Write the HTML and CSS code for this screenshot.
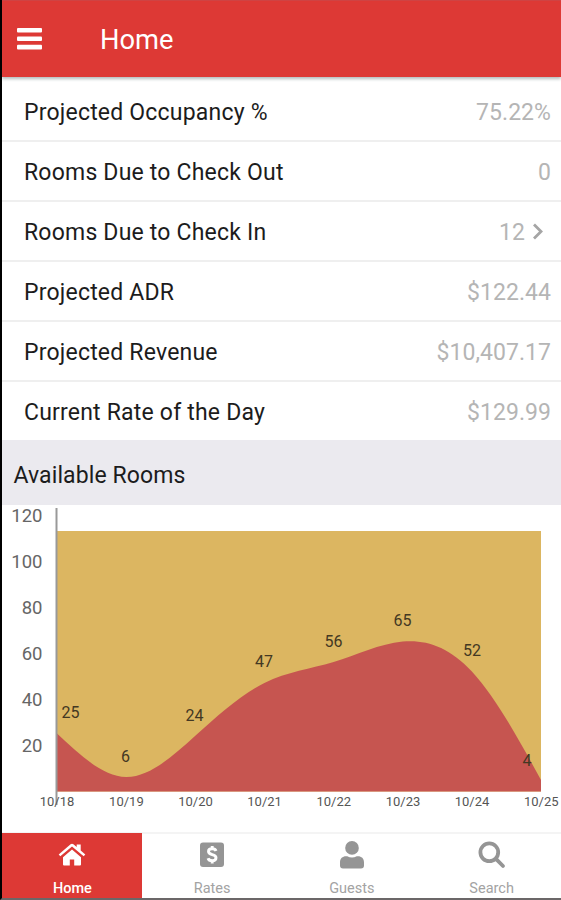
FILE: index.html
```html
<!DOCTYPE html>
<html lang="en">
<head>
    <meta charset="UTF-8">
    <meta name="viewport" content="width=device-width, initial-scale=1.0">
    <title>Home</title>
    <link rel="stylesheet" href="styles.css">
</head>
<body>
    <div class="app">
        <header class="navbar">
            <svg class="menu-icon" width="26" height="24" viewBox="0 0 26 24">
                <rect x="0" y="1" width="25" height="4.6" rx="1"/>
                <rect x="0" y="9.4" width="25" height="4.6" rx="1"/>
                <rect x="0" y="17.8" width="25" height="4.6" rx="1"/>
            </svg>
            <h1 class="title">Home</h1>
        </header>

        <ul class="stats">
            <li class="stat"><span>Projected Occupancy %</span><span class="value">75.22%</span></li>
            <li class="stat"><span>Rooms Due to Check Out</span><span class="value">0</span></li>
            <li class="stat">
                <span>Rooms Due to Check In</span>
                <span class="value link">12
                    <svg class="chevron" width="12" height="18" viewBox="0 0 12 18"><path d="M2 1.5L9 8.5L2 15.5"/></svg>
                </span>
            </li>
            <li class="stat"><span>Projected ADR</span><span class="value">$122.44</span></li>
            <li class="stat"><span>Projected Revenue</span><span class="value">$10,407.17</span></li>
            <li class="stat"><span>Current Rate of the Day</span><span class="value">$129.99</span></li>
        </ul>

        <h2 class="section-title">Available Rooms</h2>

        <svg class="chart" width="559" height="327" viewBox="0 0 559 327">
            <rect class="total" x="55" y="26" width="484" height="260.5"/>
            <path class="available" d="M55 286.5V228.5C78 250.2 101.1 271.7 124.1 272C147.2 272.3 170.3 251.6 193.3 230.8C216.3 210 239.4 189.5 262.4 178C285.5 166.5 308.5 164 331.6 157C354.6 150 377.7 138.7 400.7 136.5C423.8 134.3 446.8 141.5 469.9 166.4C493 191.3 516 233 539 275V286.5Z"/>
            <path class="axis" d="M54.5 3V300"/>
            <g class="y-labels">
                <text x="40.5" y="17">120</text>
                <text x="40.5" y="63">100</text>
                <text x="40.5" y="109">80</text>
                <text x="40.5" y="155">60</text>
                <text x="40.5" y="201">40</text>
                <text x="40.5" y="247">20</text>
            </g>
            <g class="point-labels">
                <text x="68.5" y="213">25</text>
                <text x="123.5" y="256.5">6</text>
                <text x="192.5" y="215.5">24</text>
                <text x="262" y="162">47</text>
                <text x="331.5" y="142">56</text>
                <text x="400.5" y="121">65</text>
                <text x="470" y="151">52</text>
                <text x="525" y="261">4</text>
            </g>
            <g class="x-labels">
                <text x="55" y="301">10/18</text>
                <text x="124.4" y="301">10/19</text>
                <text x="193.5" y="301">10/20</text>
                <text x="262.6" y="301">10/21</text>
                <text x="331.8" y="301">10/22</text>
                <text x="401" y="301">10/23</text>
                <text x="470" y="301">10/24</text>
                <text x="539.3" y="301">10/25</text>
            </g>
        </svg>

        <nav class="tabs">
            <a class="tab active">
                <svg width="28" height="28" viewBox="0 0 28 28">
                    <path d="M14 8.6L23 16.3V23.6Q23 24.5 22 24.5H16.2V18.6H11.8V24.5H6Q5 24.5 5 23.6V16.3Z"/>
                    <path d="M14 2.7Q14.7 2.7 15.4 3.3L18.7 6.1V3.4H22.7V9.5L27.3 13.4L25.7 15.3L14 5.6L2.3 15.3L0.7 13.4L12.6 3.3Q13.3 2.7 14 2.7Z"/>
                </svg>
                <span>Home</span>
            </a>
            <a class="tab">
                <svg width="28" height="28" viewBox="0 0 28 28">
                    <rect x="2" y="1.5" width="24" height="24.5" rx="3"/>
                    <path class="cutout" d="M18 10C17.5 8.5 16 7.8 14.2 7.8C12 7.8 10.5 8.8 10.5 10.5C10.5 14.5 18 12.6 18 16.7C18 18.5 16.5 19.7 14.2 19.7C12 19.7 10.5 18.8 10 17.2M14.2 5.1V8M14.2 19.5V22.4"/>
                </svg>
                <span>Rates</span>
            </a>
            <a class="tab">
                <svg width="28" height="28" viewBox="0 0 28 28">
                    <circle cx="14" cy="6.9" r="6.8"/>
                    <path d="M2 24.5V21.5C2 17.5 4.5 15.3 8 15.3H9.2Q14 17.7 18.8 15.3H20C23.5 15.3 26 17.5 26 21.5V24.5Q26 27.5 23 27.5H5Q2 27.5 2 24.5Z"/>
                </svg>
                <span>Guests</span>
            </a>
            <a class="tab">
                <svg width="28" height="28" viewBox="0 0 28 28">
                    <circle class="stroke" cx="11.3" cy="11.3" r="8.9"/>
                    <path class="stroke" d="M18.2 18.2L25 25"/>
                </svg>
                <span>Search</span>
            </a>
        </nav>
    </div>
</body>
</html>
```
FILE: styles.css
```css
* {
    box-sizing: border-box;
}

body {
    margin: 0;
    background: #fff;
    color: #1c1c1c;
    font-family: Roboto, sans-serif;
}

.app {
    display: flex;
    flex-direction: column;
    height: 900px;
    border-left: 2px solid #000;
    border-bottom: 2px solid #6b6768;
    overflow: hidden;
}

.navbar {
    display: flex;
    align-items: center;
    flex: none;
    height: 77px;
    padding: 0 15px;
    background: #dd3935;
    color: #fff;
    border-top: 1px solid #cf4343;
    box-shadow: 0 2px 3px #b4bcbc;
    z-index: 1;
}

.menu-icon {
    fill: #fff;
}

.title {
    margin: 2px 0 0 57px;
    font-size: 27.3px;
    font-weight: 400;
}

.stats {
    flex: none;
    margin: 0;
    padding: 5px 0 0;
    list-style: none;
}

.stat {
    display: flex;
    align-items: center;
    justify-content: space-between;
    height: 60px;
    padding: 2px 10px 0 22px;
    border-bottom: 2px solid #efefef;
    font-size: 23px;
    letter-spacing: 0.2px;
}

.stat:last-child {
    height: 58px;
    border-bottom: none;
}

.value {
    color: #b5b5b5;
    letter-spacing: 0.05px;
}

.link {
    display: flex;
    align-items: center;
    gap: 7px;
    padding-right: 7px;
}

.chevron {
    fill: none;
    stroke: #a5a5a5;
    stroke-width: 2.8;
}

.section-title {
    display: flex;
    align-items: center;
    flex: none;
    height: 65px;
    margin: 0;
    padding: 5px 12px 0 11.5px;
    background: #ebeaef;
    font-size: 23px;
    font-weight: 400;
    letter-spacing: 0.1px;
}

.chart {
    display: block;
    flex: none;
}

.total {
    fill: #dcb661;
}

.available {
    fill: #c65550;
}

.axis {
    stroke: #999;
    stroke-width: 2;
}

.y-labels {
    fill: #666;
    font-size: 18.5px;
    text-anchor: end;
}

.point-labels {
    fill: #433823;
    font-size: 16px;
    text-anchor: middle;
}

.x-labels {
    fill: #555;
    font-size: 13px;
    text-anchor: middle;
}

.tabs {
    display: flex;
    flex: 1;
    border-top: 2px solid #f4f4f4;
}

.tab {
    display: flex;
    flex: 1;
    flex-direction: column;
    align-items: center;
    gap: 11px;
    padding: 7px 0 0 1px;
    color: #a3a3a3;
    font-size: 14.5px;
    line-height: 17px;
}

.tab svg {
    flex: none;
    fill: #959595;
}

.tab .cutout {
    fill: none;
    stroke: #fff;
    stroke-width: 2.9;
}

.tab .stroke {
    fill: none;
    stroke: #959595;
    stroke-width: 3.8;
    stroke-linecap: round;
}

.tab.active {
    margin-top: -1px;
    padding-top: 8px;
    background: #dd3935;
    color: #fff;
    font-weight: 500;
}

.tab.active svg {
    fill: #fff;
}
```
